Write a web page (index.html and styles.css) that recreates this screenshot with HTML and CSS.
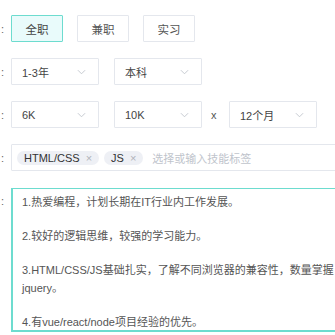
FILE: index.html
```html
<!DOCTYPE html>
<html>
<head>
  <meta charset="UTF-8">
  <title>职位信息</title>
  <link rel="stylesheet" href="styles.css">
</head>
<body>
  <div class="job-form">
    <div class="form-row">
      <span class="form-label">:</span>
      <div class="option-group">
        <button type="button" class="option active">全职</button>
        <button type="button" class="option">兼职</button>
        <button type="button" class="option">实习</button>
      </div>
    </div>
    <div class="form-row">
      <span class="form-label">:</span>
      <div class="select">
        <span class="select-value">1-3年</span>
        <svg class="select-arrow" viewBox="0 0 10 6" width="9" height="6"><path d="M1 1 L5 5 L9 1" fill="none" stroke="#c0c4cc" stroke-width="1"/></svg>
      </div>
      <div class="select">
        <span class="select-value">本科</span>
        <svg class="select-arrow" viewBox="0 0 10 6" width="9" height="6"><path d="M1 1 L5 5 L9 1" fill="none" stroke="#c0c4cc" stroke-width="1"/></svg>
      </div>
    </div>
    <div class="form-row">
      <span class="form-label">:</span>
      <div class="select">
        <span class="select-value">6K</span>
        <svg class="select-arrow" viewBox="0 0 10 6" width="9" height="6"><path d="M1 1 L5 5 L9 1" fill="none" stroke="#c0c4cc" stroke-width="1"/></svg>
      </div>
      <div class="select">
        <span class="select-value">10K</span>
        <svg class="select-arrow" viewBox="0 0 10 6" width="9" height="6"><path d="M1 1 L5 5 L9 1" fill="none" stroke="#c0c4cc" stroke-width="1"/></svg>
      </div>
      <span class="times">x</span>
      <div class="select">
        <span class="select-value">12个月</span>
        <svg class="select-arrow" viewBox="0 0 10 6" width="9" height="6"><path d="M1 1 L5 5 L9 1" fill="none" stroke="#c0c4cc" stroke-width="1"/></svg>
      </div>
    </div>
    <div class="form-row">
      <span class="form-label">:</span>
      <div class="tag-input">
        <span class="tag">HTML/CSS<span class="tag-close">×</span></span>
        <span class="tag">JS<span class="tag-close">×</span></span>
        <span class="tag-placeholder">选择或输入技能标签</span>
      </div>
    </div>
    <div class="form-row form-row-top">
      <span class="form-label">:</span>
      <div class="textarea">
        <p>1.热爱编程，计划长期在IT行业内工作发展。</p>
        <p>2.较好的逻辑思维，较强的学习能力。</p>
        <p>3.HTML/CSS/JS基础扎实，了解不同浏览器的兼容性，数量掌握<br>jquery。</p>
        <p>4.有vue/react/node项目经验的优先。</p>
      </div>
    </div>
  </div>
</body>
</html>
```

FILE: styles.css
```css
html, body {
  overflow: hidden;
}
body {
  margin: 0;
  padding: 15px 0 0 0;
  background: #ffffff;
  font-family: "Liberation Sans", "Noto Sans CJK SC", sans-serif;
  font-size: 11px;
  color: #444;
}
.job-form {
  display: flex;
  flex-direction: column;
  gap: 16px;
}
.form-row {
  display: flex;
  align-items: center;
  height: 27px;
}
.form-row-top {
  align-items: flex-start;
  height: auto;
  margin-top: 1px;
}
.form-label {
  width: 11px;
  flex: none;
  padding-left: 1px;
  box-sizing: border-box;
  color: #666;
}
.form-row-top .form-label {
  line-height: 18px;
  padding-top: 4px;
}

/* job type buttons */
.option-group {
  display: flex;
  gap: 14px;
}
.option {
  width: 52px;
  height: 27px;
  border: 1px solid #e4e7ed;
  background: #ffffff;
  border-radius: 1px;
  font-family: inherit;
  font-size: 11.5px;
  color: #555;
  padding: 0;
  cursor: pointer;
}
.option.active {
  border-color: #6ddccf;
  background: #e9fbfb;
  color: #444;
}

/* selects */
.select {
  width: 88px;
  height: 27px;
  box-sizing: border-box;
  border: 1px solid #e4e7ed;
  border-radius: 1px;
  display: flex;
  align-items: center;
  justify-content: space-between;
  padding: 0 12px 0 10px;
  margin-right: 15px;
  flex: none;
  color: #444;
}
.select-arrow {
  display: block;
}
.times {
  width: 18px;
  margin-left: -6px;
  flex: none;
  color: #555;
}

/* skill tags */
.tag-input {
  width: 360px;
  height: 27px;
  flex: none;
  box-sizing: border-box;
  border: 1px solid #e4e7ed;
  border-radius: 1px;
  display: flex;
  align-items: center;
  gap: 5px;
  padding: 0 5px;
}
.tag {
  height: 14px;
  line-height: 14px;
  border-radius: 7px;
  background: #eef0f5;
  padding: 0 7px 0 7px;
  color: #333;
  display: flex;
  align-items: center;
  gap: 6px;
}
.tag-close {
  color: #b0b3ba;
  font-size: 11px;
}
.tag-placeholder {
  color: #c0c4cc;
  margin-left: 4px;
}

/* description */
.textarea {
  width: 360px;
  height: 144px;
  flex: none;
  box-sizing: border-box;
  border: 1px solid #6ddccf;
  border-bottom-width: 2px;
  border-left-width: 2px;
  padding: 4px 9px;
  line-height: 18px;
  color: #555;
  white-space: nowrap;
  overflow: hidden;
}
.textarea p {
  margin: 0 0 16px 0;
}
```
